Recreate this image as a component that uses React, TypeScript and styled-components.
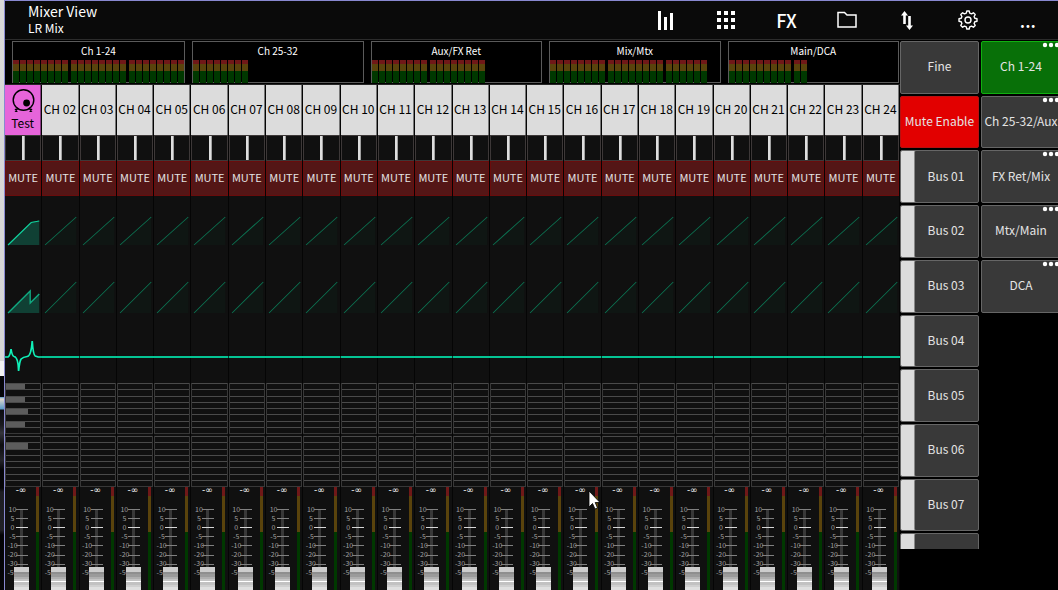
import React from "react";
import styled, { createGlobalStyle } from "styled-components";

const GlobalStyle = createGlobalStyle`
  * { box-sizing: border-box; }
  html, body { margin: 0; background: #000; overflow: hidden; }
  body, button, input { font-family: "Noto Sans CJK SC", "Open Sans", sans-serif; }
  button { padding: 0; border: 0; color: inherit; background: none; white-space: nowrap; }
`;

const Desktop = styled.div`
  display: flex;
  height: 100vh;
  overflow: hidden;
  background: #000;
  color: #fff;
`;

const WindowBehind = styled.div`
  flex: none;
  width: 4px;
  background: linear-gradient(
    #d9d9d9 0, #d6d6d6 361px, #f2f2f2 361px, #f2f2f2 376px, #050508 376px, #050508 397px,
    #5a9ac8 397px, #dfd8cc 399px, #5a9ac8 409px, #0c0c10 410px, #1a1a20 425px, #35353c 433px,
    #0c0c10 445px, #25252b 460px, #050508 470px, #050508 488px, #1e1e24 492px, #202026 530px, #030306 535px, #050508 100%
  );
`;

const AppWindow = styled.div`
  flex: 1;
  min-width: 0;
  display: flex;
  flex-direction: column;
  border-left: 1px solid #8888d0;
  border-top: 1px solid #8888d0;
`;

const Header = styled.header`
  flex: none;
  display: flex;
  justify-content: space-between;
  height: 39px;
  padding-left: 23px;
  background: #0a0a0a;
  border-bottom: 1px solid #2c2c2c;
`;

const Title = styled.h1`
  margin: 0;
  font-size: 14px;
  font-weight: 400;
  line-height: 21px;
`;

const Subtitle = styled.p`
  margin: 0;
  font-size: 12px;
  line-height: 12px;
`;

const Toolbar = styled.nav`
  display: grid;
  grid-template-columns: repeat(7, 1fr);
  width: 41%;
`;

const ToolButton = styled.button`
  display: flex;
  align-items: center;
  justify-content: center;
  font-size: 18px;
  line-height: 20px;
  font-weight: 500;
`;

const Body = styled.div`
  flex: 1;
  min-height: 0;
  display: flex;
`;

const Main = styled.main`
  flex: 1;
  min-width: 0;
  display: flex;
  flex-direction: column;
`;

const Banks = styled.div`
  flex: none;
  display: grid;
  grid-template-columns: repeat(5, 1fr);
  gap: 7px;
  height: 45px;
  padding: 1px 1px 2px 7px;
  border-bottom: 1px solid #262626;
`;

const Bank = styled.button`
  display: flex;
  flex-direction: column;
  justify-content: space-between;
  border: 1px solid #5a5a5a;
  border-bottom: 0;
  background: #000;
  font-size: 10px;
  line-height: 18px;
  text-align: center;
`;

const BankMeters = styled.div`
  display: flex;
  gap: 3px;
  height: 23px;
  box-shadow: inset 0 -1px #5a5a5a;
`;

const BankGroup = styled.div`
  display: flex;
  gap: 1px;
`;

const BankBar = styled.i`
  width: 6px;
  background: linear-gradient(#701818 4px, #5a430c 4px 11px, #003800 11px);
`;

const Strips = styled.div`
  flex: 1;
  min-height: 0;
  display: grid;
  grid-template-columns: repeat(24, minmax(0, 1fr));
`;

const Strip = styled.section`
  display: flex;
  flex-direction: column;
  background: #101010;
  border-right: 1px solid #050505;
`;

const NameButton = styled.button<{ $pink?: boolean }>`
  flex: none;
  display: flex;
  flex-direction: column;
  align-items: center;
  justify-content: center;
  height: 50px;
  padding-bottom: ${(p) => (p.$pink ? 1 : 3)}px;
  border-right: 1px solid ${(p) => (p.$pink ? "#8a3a84" : "#777")};
  background: ${(p) => (p.$pink ? "#e664da" : "#dcdcdc")};
  color: #000;
  font-size: 12px;
  line-height: 17px;
`;

const Pan = styled.input`
  appearance: none;
  flex: none;
  width: 100%;
  height: 26px;
  margin: 0;
  padding-left: 1px;
  border: 1px solid #3d3838;
  background: #101010;
  &::-webkit-slider-thumb {
    appearance: none;
    width: 3px;
    height: 24px;
    background: #dedede;
    border-right: 1px solid #a0a0a0;
  }
`;

const MuteButton = styled.button`
  flex: none;
  height: 35px;
  padding-bottom: 2px;
  border: 1px solid #6a0c0c;
  background: #541616;
  color: #e4e4e4;
  font-size: 11px;
  line-height: 17px;
`;

const Curves = styled.svg`
  flex: none;
  display: block;
  width: calc(100% + 1px);
  height: 187px;
`;

const Sends = styled.div`
  flex: none;
  display: grid;
  grid-template-rows: repeat(8, 1fr);
  height: 51px;
  margin-bottom: 2px;
  border: 1px solid #383838;
  border-top: 0;
  & + & { margin-bottom: 0; }
`;

const Send = styled.div<{ $level: number }>`
  border-top: 1px solid #4a4a4a;
  background: linear-gradient(90deg, #5c5c5c ${(p) => p.$level}%, transparent ${(p) => p.$level}%);
`;

const FaderArea = styled.div`
  flex: none;
  display: grid;
  grid-template-columns: 9px 6px 9px 7px 3px;
  grid-template-rows: 116px;
`;

const Readout = styled.output`
  grid-area: 1 / 1 / 2 / 4;
  padding-left: 8px;
  font: 9px "DejaVu Sans", sans-serif;
  line-height: 6px;
  text-align: center;
`;

const Scale = styled.ol`
  grid-area: 1 / 1 / 2 / 3;
  margin: 0;
  padding: 18px 0 0;
  list-style: none;
  font-size: 7px;
  line-height: 9px;
  color: #a0a0a0;
  text-align: center;
`;

const Ticks = styled.svg`
  grid-area: 1 / 2 / 2 / 4;
  display: block;
  width: 15px;
  height: 116px;
`;

const FaderInput = styled.input`
  grid-area: 1 / 2 / 2 / 4;
  appearance: none;
  writing-mode: vertical-lr;
  direction: rtl;
  width: 15px;
  height: 96px;
  margin: 20px 0 0;
  background: transparent;
  &::-webkit-slider-thumb {
    appearance: none;
    width: 15px;
    height: 36px;
    background: linear-gradient(
      #cdcdcd 5px, #8f8f8f 5px 7px, #9b9b9b 7px 10px, #b0b0b0 10px 12px, #c4c4c4 12px 14px,
      #fff 14px 15px, #c2c2c2 15px 18px, #d0d0d0 18px 20px, #e0e0e0 20px
    );
  }
`;

const Meter = styled.div`
  grid-column: 5;
  grid-row: 1;
  background: linear-gradient(#701818 9px, #5a430c 9px 45px, #003800 45px);
`;

const Rail = styled.aside`
  flex: none;
  display: flex;
  width: 158px;
  overflow: hidden;
`;

const RailColumn = styled.div<{ $width: number; $short?: boolean }>`
  flex: none;
  width: ${(p) => p.$width}px;
  height: ${(p) => (p.$short ? "509px" : "100%")};
  padding: 1px 2px 0 0;
  overflow: hidden;
`;

const RailGrid = styled.div`
  display: grid;
  grid-template-rows: repeat(10, 1fr);
  gap: 2px;
  height: 545px;
`;

const tones = {
  gray: ["#393939", "#666"],
  red: ["#e20000", "#b81010"],
  green: ["#087008", "#10b010"],
};

const RailButton = styled.button<{ $tone?: keyof typeof tones; $tab?: boolean }>`
  position: relative;
  border: 1px solid ${(p) => tones[p.$tone ?? "gray"][1]};
  border-radius: 2px;
  background: ${(p) => tones[p.$tone ?? "gray"][0]};
  box-shadow: ${(p) => (p.$tab ? "inset 13px 0 #dcdcdc, inset 14px 0 #888" : "none")};
  padding: 0 0 2px ${(p) => (p.$tab ? 13 : 0)}px;
  color: #e4e4e4;
  font-size: 12px;
  line-height: 18px;
`;

const Dots = styled.svg`
  position: absolute;
  top: 0;
  right: 0;
`;

const Pointer = styled.svg`
  position: absolute;
  left: 588px;
  top: 490px;
`;

const range = (n: number) => Array.from({ length: n }, (_, i) => i);
const scaleMarks = ["10", "5", "0", "-5", "-10", "-20", "-30", "-50"];
const banks = [
  { name: "Ch 1-24", groups: [8, 8, 8] },
  { name: "Ch 25-32", groups: [8] },
  { name: "Aux/FX Ret", groups: [8, 8] },
  { name: "Mix/Mtx", groups: [8, 8, 6] },
  { name: "Main/DCA", groups: [9, 2] },
];
const sendLevels = [[55, 0, 55, 0, 65, 0, 55, 0], [0, 65, 0, 0, 0, 0, 0, 0]];
const pages = ["Ch 1-24", "Ch 25-32/Aux", "FX Ret/Mix", "Mtx/Main", "DCA"];

function DrumIcon() {
  return (
    <svg width="24" height="26" viewBox="0 0 24 26" fill="none" stroke="#000" strokeWidth="1.4">
      <circle cx="12.500" cy="12" r="10.300" />
      <circle cx="15.600" cy="15" r="3.400" fill="#000" stroke="none" />
      <path d="M7 20 L4 23.500 M18 20 L21 23.500 M4 21 L6.500 23.500 M21 21 L18.500 23.500" />
    </svg>
  );
}

function ChannelCurves({ active }: { active: boolean }) {
  return (
    <Curves viewBox="0 0 37 187" preserveAspectRatio="none" fill="none">
      {active ? (
        <>
          <path d="M3 49 L26 26 L34 24.500 V49Z" fill="#104034" />
          <path d="M3 49 L26 26.500 L34 25" stroke="#10d09c" strokeWidth="1.200" />
          <path d="M3 117 L25 95 V107 L34 98 V117Z" fill="#104034" />
          <path d="M3 117 L25 95 V107 L34 98" stroke="#10a880" strokeWidth="1.400" />
          <path
            d="M0 161 H3 Q5 160 6 153 Q7 160 9 160.500 Q13 161 13.500 175 Q14.500 165 16 163 Q18 161 22 160.500 Q26 160 27 145 Q28 159 30 160 L33 161 H37"
            stroke="#10f0b8"
            strokeWidth="1.700"
          />
        </>
      ) : (
        <>
          <path d="M3 49 L34 21 V49Z M3 117 L34 86 V117Z" fill="#0f1613" />
          <path d="M3 49 L34 21 M3 117 L34 86" stroke="#0c7050" />
          <path d="M0 161 H37" stroke="#04c494" strokeWidth="2" />
        </>
      )}
    </Curves>
  );
}

function ChannelStrip({ index }: { index: number }) {
  const name = index === 0 ? "Test" : `CH ${String(index + 1).padStart(2, "0")}`;
  return (
    <Strip aria-label={name}>
      <NameButton $pink={index === 0}>
        {index === 0 && <DrumIcon />}
        {name}
      </NameButton>
      <Pan type="range" min={-50} max={50} defaultValue={0} aria-label={`${name} pan`} />
      <MuteButton>MUTE</MuteButton>
      <ChannelCurves active={index === 0} />
      {sendLevels.map((group, g) => (
        <Sends key={g}>
          {group.map((level, i) => (
            <Send key={i} $level={index === 0 ? level : 0} />
          ))}
        </Sends>
      ))}
      <FaderArea>
        <Readout>-∞</Readout>
        <Scale>
          {scaleMarks.map((m) => (
            <li key={m}>{m}</li>
          ))}
        </Scale>
        <Ticks viewBox="0 0 15 116">
          <path d="M7.500 22 V116" stroke="#383838" strokeWidth="3" />
          <path d="M2 22.500 H14 M2 31.500 H14 M2 49.500 H14 M2 58.500 H14 M2 68.500 H14 M2 77.500 H14" stroke="#808080" />
          <path d="M2 40.500 H14" stroke="#d8d8d8" />
        </Ticks>
        <FaderInput type="range" min={0} max={100} defaultValue={0} aria-label={`${name} level`} />
        <Meter />
      </FaderArea>
    </Strip>
  );
}

export default function App() {
  return (
    <Desktop>
      <GlobalStyle />
      <WindowBehind />
      <AppWindow>
        <Header>
          <div>
            <Title>Mixer View</Title>
            <Subtitle>LR Mix</Subtitle>
          </div>
          <Toolbar>
            <ToolButton aria-label="Meters">
              <svg width="18" height="20" viewBox="0 0 18 20" stroke="#fff" strokeWidth="3">
                <path d="M2.500 1 V20 M8.500 7 V20 M14.500 3 V20" />
              </svg>
            </ToolButton>
            <ToolButton aria-label="Layers">
              <svg width="18" height="18" viewBox="0 0 18 18" fill="#fff">
                {range(9).map((i) => (
                  <rect key={i} x={(i % 3) * 7} y={Math.floor(i / 3) * 7} width="4" height="4" />
                ))}
              </svg>
            </ToolButton>
            <ToolButton>FX</ToolButton>
            <ToolButton aria-label="Library">
              <svg width="20" height="18" viewBox="0 0 20 18" fill="none" stroke="#fff" strokeWidth="1.500">
                <path d="M1 16 V1.500 H7.500 L10 4 H19 V16Z" />
              </svg>
            </ToolButton>
            <ToolButton aria-label="Routing">
              <svg width="14" height="20" viewBox="0 0 14 20" fill="#fff">
                <path d="M4.500 1 L8 5.500 H5.800 V14 H3.200 V5.500 H1Z M9.500 20 L6 15.500 H8.200 V6 H10.800 V15.500 H13Z" />
              </svg>
            </ToolButton>
            <ToolButton aria-label="Setup">
              <svg width="20" height="20" viewBox="0 0 20 20" fill="none" stroke="#fff" strokeWidth="1.400" strokeLinejoin="round">
                <path d="M8.300 3.200 L8.800 1 H11.200 L11.700 3.200 L13.500 3.900 L15.400 2.800 L17.200 4.600 L16.100 6.500 L16.800 8.300 L19 8.800 V11.200 L16.800 11.700 L16.100 13.500 L17.200 15.400 L15.400 17.200 L13.500 16.100 L11.700 16.800 L11.200 19 H8.800 L8.300 16.800 L6.500 16.100 L4.600 17.200 L2.800 15.400 L3.900 13.500 L3.200 11.700 L1 11.200 V8.800 L3.200 8.300 L3.900 6.500 L2.800 4.600 L4.600 2.800 L6.500 3.900Z" />
                <circle cx="10" cy="10" r="3" />
              </svg>
            </ToolButton>
            <ToolButton aria-label="More">...</ToolButton>
          </Toolbar>
        </Header>
        <Body>
          <Main>
            <Banks>
              {banks.map((bank) => (
                <Bank key={bank.name}>
                  {bank.name}
                  <BankMeters>
                    {bank.groups.map((count, g) => (
                      <BankGroup key={g}>
                        {range(count).map((i) => (
                          <BankBar key={i} />
                        ))}
                      </BankGroup>
                    ))}
                  </BankMeters>
                </Bank>
              ))}
            </Banks>
            <Strips>
              {range(24).map((i) => (
                <ChannelStrip key={i} index={i} />
              ))}
            </Strips>
          </Main>
          <Rail>
            <RailColumn $width={81} $short>
              <RailGrid>
                <RailButton>Fine</RailButton>
                <RailButton $tone="red">Mute Enable</RailButton>
                {range(7).map((i) => (
                  <RailButton key={i} $tab>{`Bus 0${i + 1}`}</RailButton>
                ))}
                <RailButton $tab aria-label="Next bus" />
              </RailGrid>
            </RailColumn>
            <RailColumn $width={82}>
              <RailGrid>
                {pages.map((page, i) => (
                  <RailButton key={page} $tone={i === 0 ? "green" : "gray"}>
                    {page}
                    <Dots width="18" height="6" viewBox="0 0 18 6" fill="#fff">
                      <circle cx="3" cy="3" r="2.200" />
                      <circle cx="9" cy="3" r="2.200" />
                      <circle cx="15" cy="3" r="2.200" />
                    </Dots>
                  </RailButton>
                ))}
              </RailGrid>
            </RailColumn>
          </Rail>
        </Body>
      </AppWindow>
      <Pointer width="13" height="21" viewBox="0 0 13 21">
        <path d="M1 1 V17 L4.500 13.500 L7 19 L9.500 18 L7.200 12.500 H12Z" fill="#fff" stroke="#000" strokeWidth="0.800" />
      </Pointer>
    </Desktop>
  );
}
